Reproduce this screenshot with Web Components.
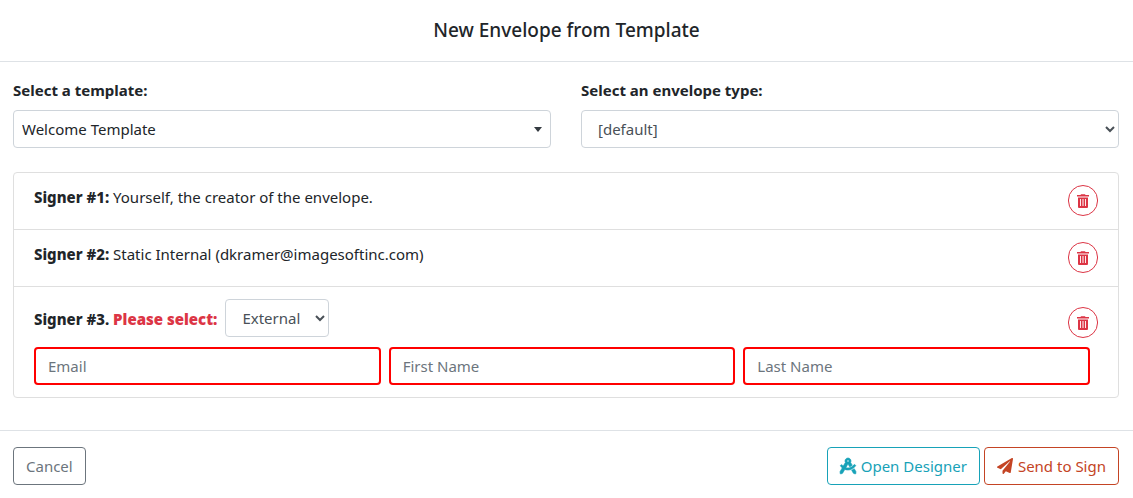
<!DOCTYPE html>
<html lang="en">
<head>
<meta charset="utf-8">
<title>New Envelope from Template</title>
<style>
  body { margin: 0; background: #fff; color: #212529; font: 15px/24px "Noto Sans", "Open Sans", sans-serif; }
  signer-row b { font-weight: 800; }
</style>
</head>
<body>
<envelope-dialog>
  <span slot="title">New Envelope from Template</span>
  <select-field label="Select a template:" value="Welcome Template" look="picker"></select-field>
  <select-field label="Select an envelope type:" value="[default]"></select-field>
  <signer-row slot="signers"><b>Signer #1:</b> Yourself, the creator of the envelope.</signer-row>
  <signer-row slot="signers"><b>Signer #2:</b> Static Internal (dkramer@imagesoftinc.com)</signer-row>
  <signer-choice slot="signers" number="3"></signer-choice>
  <action-button slot="cancel">Cancel</action-button>
  <action-button slot="actions" tone="info" icon="compass">Open Designer</action-button>
  <action-button slot="actions" tone="send" icon="plane">Send to Sign</action-button>
</envelope-dialog>

<script>
const base = `
  *, *::before, *::after { box-sizing: border-box; }
  button, select, input { font: inherit; margin: 0; }
`;

class EnvelopeDialog extends HTMLElement {
  constructor() {
    super();
    this.attachShadow({ mode: "open" }).innerHTML = `
      <style>${base}
        :host { display: block; }
        header { padding: 16px; border-bottom: 1px solid #dee2e6; text-align: center; }
        h1 { margin: 0; font-size: 19px; line-height: 29px; font-weight: 500; }
        main { padding: 16px 14px 32px 13px; }
        .fields { display: grid; grid-template-columns: 1fr 1fr; gap: 30px; margin-bottom: 24px; }
        .signers { border: 1px solid #dfdfdf; border-radius: 4px; }
        footer { display: flex; justify-content: space-between; padding: 16px 14px 13px 13px; border-top: 1px solid #dee2e6; }
        .actions { display: flex; gap: 4px; }
      </style>
      <header><h1><slot name="title"></slot></h1></header>
      <main>
        <div class="fields"><slot></slot></div>
        <div class="signers"><slot name="signers"></slot></div>
      </main>
      <footer><slot name="cancel"></slot><div class="actions"><slot name="actions"></slot></div></footer>`;
  }
}

class SelectField extends HTMLElement {
  connectedCallback() {
    const picker = this.getAttribute("look") === "picker";
    const root = this.attachShadow({ mode: "open" });
    root.innerHTML = `
      <style>${base}
        :host { display: block; min-width: 0; }
        label { display: block; font-weight: 700; margin-bottom: 8px; }
        .box { position: relative; }
        select { display: block; width: 100%; height: 38px; padding: 6px 12px; border: 1px solid #ced4da; border-radius: 4px; background: #fff; color: #495057; }
        .picker { appearance: none; padding: 6px 8px; color: #212529; }
        svg { position: absolute; right: 9px; top: 17px; pointer-events: none; }
      </style>
      <label for="choice"></label>
      <div class="box">
        <select id="choice" class="${picker ? "picker" : ""}"><option></option></select>
        ${picker ? '<svg width="8" height="5" viewBox="0 0 8 5" aria-hidden="true"><path d="M0 0h8L4 5z" fill="#343a40"/></svg>' : ""}
      </div>`;
    root.querySelector("label").textContent = this.getAttribute("label");
    root.querySelector("option").textContent = this.getAttribute("value");
  }
}

class DeleteButton extends HTMLElement {
  constructor() {
    super();
    this.attachShadow({ mode: "open" }).innerHTML = `
      <style>${base}
        :host { display: block; flex: none; }
        button { display: flex; align-items: center; justify-content: center; width: 30px; height: 31px; padding: 0; border: 1px solid #dc3545; border-radius: 15px; background: #fff; color: #dc3545; }
      </style>
      <button type="button" aria-label="Remove signer">
        <svg width="12" height="14" viewBox="0 0 12 14" fill="currentColor" aria-hidden="true"><path d="M4 .300h4L8.500 1H12v1.600H0V1h3.500z"/><path fill-rule="evenodd" d="M1 3.400h10V13a1 1 0 0 1-1 1H2a1 1 0 0 1-1-1zM3 5v7h.900V5zM5.500 5v7h1V5zM8.100 5v7H9V5z"/></svg>
      </button>`;
  }
}

class SignerRow extends HTMLElement {
  constructor() {
    super();
    this.attachShadow({ mode: "open" }).innerHTML = `
      <style>${base}
        :host { display: flex; justify-content: space-between; align-items: flex-start; padding: 12px 20px; border-bottom: 1px solid #dfdfdf; }
        delete-button { margin-bottom: 1px; }
      </style>
      <div><slot></slot></div><delete-button></delete-button>`;
  }
}

class SignerChoice extends HTMLElement {
  connectedCallback() {
    this.attachShadow({ mode: "open" }).innerHTML = `
      <style>${base}
        :host { display: block; padding: 12px 20px; }
        .top { display: flex; align-items: flex-start; height: 38px; margin-bottom: 10px; }
        label { font-weight: 800; padding-top: 8px; margin-right: 8px; }
        em { font-style: normal; font-weight: 900; color: #dc3545; }
        select { width: 104px; height: 38px; padding: 6px 12px; border: 1px solid #ced4da; border-radius: 4px; background: #fff; color: #495057; }
        delete-button { margin: 8px 0 0 auto; }
        .person { display: grid; grid-template-columns: repeat(3, 1fr); gap: 8px; padding-right: 8px; }
        input { width: 100%; min-width: 0; height: 38px; padding: 6px 12px; border: 2px solid #f00; border-radius: 4px; background: #fff; color: #495057; }
        input::placeholder { color: #6c757d; opacity: 1; }
      </style>
      <div class="top">
        <label for="kind">Signer #${this.getAttribute("number")}. <em>Please select:</em></label>
        <select id="kind"><option>External</option></select>
        <delete-button></delete-button>
      </div>
      <div class="person">
        <input type="email" placeholder="Email" aria-label="Email">
        <input type="text" placeholder="First Name" aria-label="First Name">
        <input type="text" placeholder="Last Name" aria-label="Last Name">
      </div>`;
  }
}

const icons = {
  compass: `<svg viewBox="0 0 512 512" fill="currentColor" stroke="currentColor" stroke-width="20" aria-hidden="true"><path d="M457.010 344.420c-25.050 20.330-52.630 37.180-82.540 49.050l54.380 94.190 53.950 23.040c9.810 4.190 20.890-2.210 22.170-12.800l7.020-58.250-54.980-95.230zm42.490-94.560c4.860-7.670 1.890-17.990-6.050-22.390l-28.070-15.570c-7.480-4.150-16.610-1.460-21.260 5.720C403.010 281.150 332.250 320 256 320c-23.930 0-47.230-4.250-69.410-11.530l67.360-116.680c.7.020 1.340.21 2.040.21s1.350-.19 2.040-.21l51.090 88.500c31.230-8.960 59.560-25.750 82.610-48.920l-51.790-89.710C347.390 128.030 352 112.630 352 96c0-53.020-42.980-96-96-96s-96 42.980-96 96c0 16.630 4.610 32.030 12.050 45.660l-68.300 118.310c-12.550-11.610-23.960-24.590-33.680-39-4.790-7.100-13.970-9.620-21.380-5.330l-27.750 16.070c-7.850 4.540-10.630 14.900-5.640 22.470 15.570 23.640 34.690 44.210 55.980 62.020L0 439.660l7.020 58.250c1.280 10.590 12.360 16.990 22.170 12.800l53.950-23.040 70.800-122.630C186.130 377.280 220.620 384 256 384c99.050 0 190.880-51.010 243.500-134.140zM256 64c17.670 0 32 14.330 32 32s-14.330 32-32 32-32-14.330-32-32 14.330-32 32-32z"/></svg>`,
  plane: `<svg viewBox="0 0 512 512" fill="currentColor" aria-hidden="true"><path d="M476 3.200L12.500 270.600c-18.100 10.400-15.800 35.600 2.200 43.200L121 358.400l287.300-253.200c5.500-4.900 13.300 2.600 8.600 8.300L176 407v80.500c0 23.600 28.500 32.900 42.500 15.800L282 426l124.600 52.200c14.200 6 30.400-2.900 33-18.200l72-432C515 7.800 493.300-6.800 476 3.200z"/></svg>`
};

class ActionButton extends HTMLElement {
  connectedCallback() {
    this.attachShadow({ mode: "open" }).innerHTML = `
      <style>${base}
        :host { display: block; color: #6c757d; }
        :host([tone="info"]) { color: #17a2b8; }
        :host([tone="send"]) { color: #c44424; }
        button { display: flex; align-items: center; gap: 5px; height: 38px; padding: 0 12px; border: 1px solid currentColor; border-radius: 4px; background: #fff; color: inherit; white-space: nowrap; }
        svg { width: 16px; height: 16px; overflow: visible; }
      </style>
      <button type="button">${icons[this.getAttribute("icon")] || ""}<span><slot></slot></span></button>`;
  }
}

customElements.define("delete-button", DeleteButton);
customElements.define("select-field", SelectField);
customElements.define("signer-row", SignerRow);
customElements.define("signer-choice", SignerChoice);
customElements.define("action-button", ActionButton);
customElements.define("envelope-dialog", EnvelopeDialog);
</script>
</body>
</html>
